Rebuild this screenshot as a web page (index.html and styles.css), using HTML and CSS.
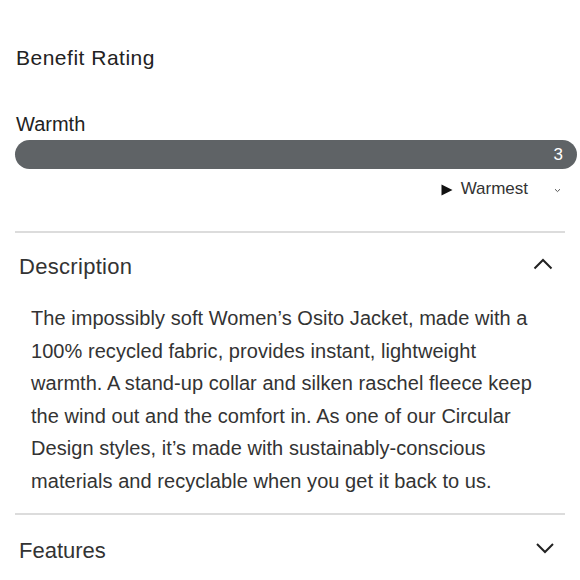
FILE: index.html
```html
<!DOCTYPE html>
<html>
<head>
<meta charset="utf-8">
<link rel="stylesheet" href="styles.css">
</head>
<body>
<div class="page">
  <section class="rating">
    <h2 class="rating-title">Benefit Rating</h2>
    <div class="metric-label">Warmth</div>
    <div class="bar"><span class="bar-value">3</span></div>
    <div class="scale-row">
      <svg class="tri" width="12" height="12" viewBox="0 0 12 12"><path d="M0.5 0.5 L11.5 6 L0.5 11.5 Z" fill="#111"/></svg>
      <span class="scale-text">Warmest</span>
      <svg class="mini-chev" width="7" height="5" viewBox="0 0 7 5"><path d="M1 1.2 L3.5 3.6 L6 1.2" fill="none" stroke="#555" stroke-width="1"/></svg>
    </div>
  </section>
  <section class="acc acc-open">
    <div class="acc-head">
      <span class="acc-title title-desc">Description</span>
      <svg class="chev" width="20" height="12" viewBox="0 0 20 12"><path d="M1.5 10.5 L10 2 L18.5 10.5" fill="none" stroke="#222" stroke-width="2"/></svg>
    </div>
    <p class="acc-body">The impossibly soft Women’s Osito Jacket, made with a 100% recycled fabric, provides instant, lightweight warmth. A stand-up collar and silken raschel fleece keep the wind out and the comfort in. As one of our Circular Design styles, it’s made with sustainably-conscious materials and recyclable when you get it back to us.</p>
  </section>
  <section class="acc">
    <div class="acc-head">
      <span class="acc-title">Features</span>
      <svg class="chev" width="20" height="12" viewBox="0 0 20 12"><path d="M2 2 L10 10 L18 2" fill="none" stroke="#222" stroke-width="2"/></svg>
    </div>
  </section>
</div>
</body>
</html>
```
FILE: styles.css
```css
* { box-sizing: border-box; }
html, body { margin: 0; padding: 0; background: #fff; }
body {
  font-family: "Liberation Sans", Arial, Helvetica, sans-serif;
  color: #222;
  width: 580px;
  height: 580px;
  overflow: hidden;
}
.page { padding-top: 46px; }
.rating { padding-left: 15px; padding-right: 3px; }
.rating-title {
  margin: 0 0 0 1px;
  font-size: 21px;
  line-height: 24px;
  letter-spacing: 0.5px;
  font-weight: normal;
  color: #222;
}
.metric-label {
  margin: 42px 0 0 1px;
  font-size: 20px;
  line-height: 24px;
  color: #222;
}
.bar {
  margin-top: 4px;
  height: 29px;
  border-radius: 15px;
  background: #5f6366;
  display: flex;
  justify-content: flex-end;
  align-items: center;
  padding-right: 14px;
}
.bar-value {
  color: #fff;
  font-size: 17px;
  line-height: 29px;
}
.scale-row {
  margin-top: 10px;
  display: flex;
  justify-content: flex-end;
  align-items: center;
  height: 20px;
  padding-right: 16px;
}
.tri { margin-right: 8px; margin-top: 1px; }
.scale-text { font-size: 17px; line-height: 20px; color: #333; }
.mini-chev { margin-left: 26px; margin-top: 2px; }
.acc {
  margin: 32px 15px 0 15px;
  border-top: 2px solid #dcdcdc;
}
.acc + .acc { margin-top: 15px; }
.acc-head {
  display: flex;
  justify-content: space-between;
  align-items: center;
  padding: 21px 10px 0 4px;
  height: 47px;
}
.acc-open .acc-head .chev { margin-top: -4px; margin-right: 2px; }
.acc .acc-head .chev { margin-top: -6px; }
.acc + .acc .acc-head { padding-top: 23px; height: 49px; }
.acc-title {
  font-size: 22px;
  line-height: 26px;
  color: #333;
}
.title-desc { letter-spacing: 0.3px; }
.acc-body {
  margin: 22px 0 0 0;
  padding: 0 24px 0 16px;
  font-size: 20px;
  line-height: 32.6px;
  letter-spacing: 0.05px;
  color: #333;
}
```
